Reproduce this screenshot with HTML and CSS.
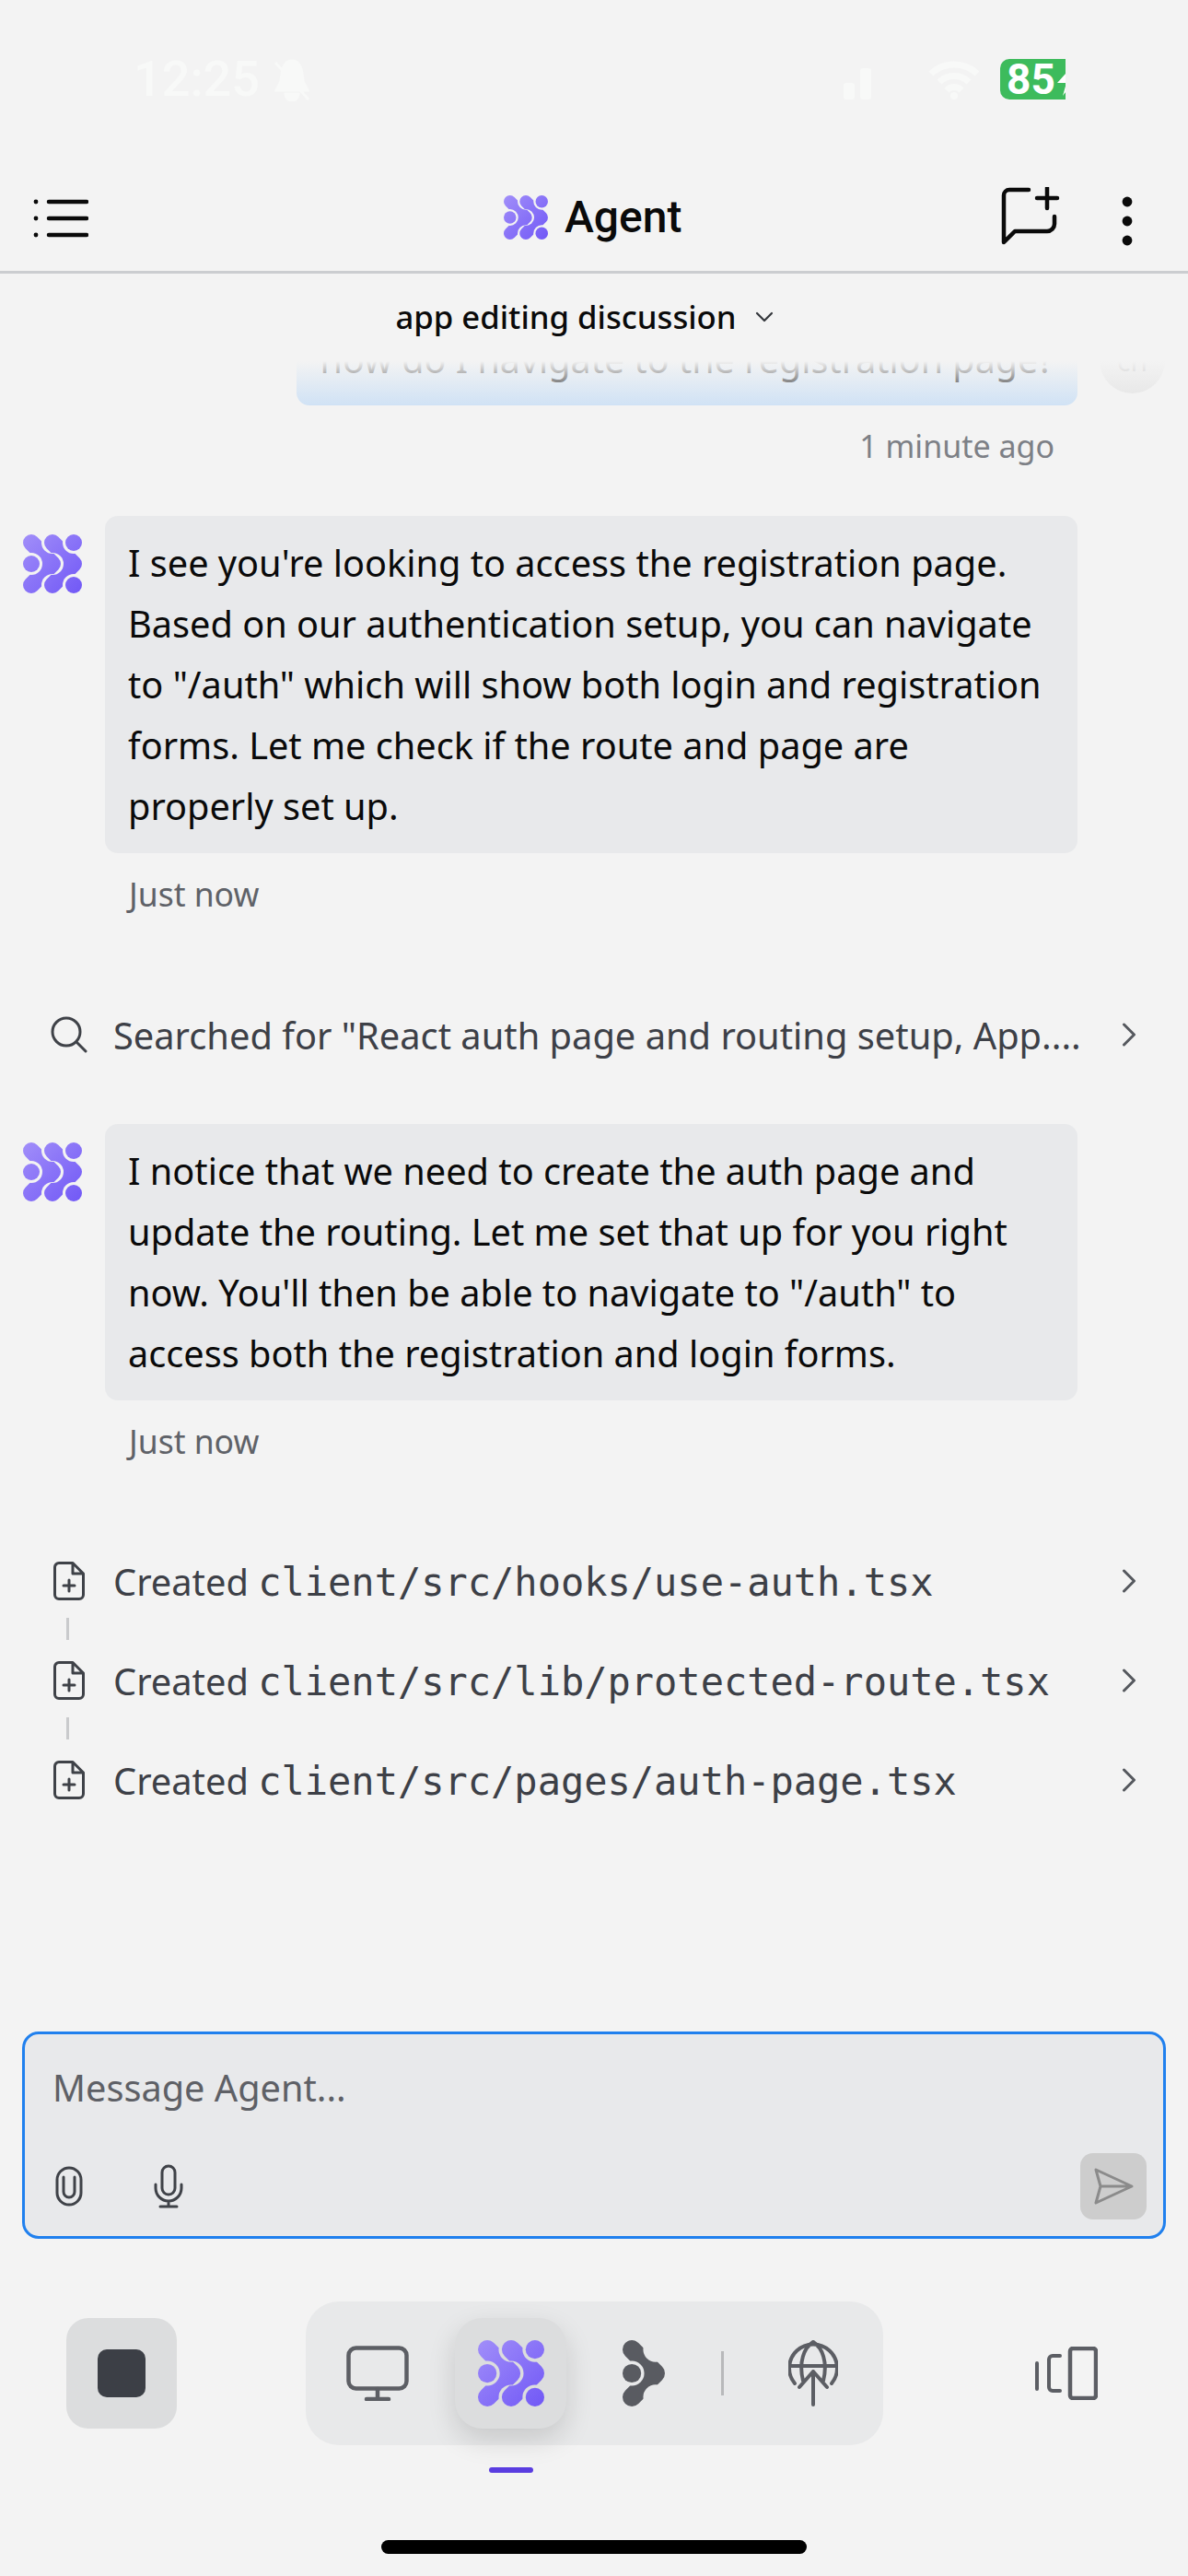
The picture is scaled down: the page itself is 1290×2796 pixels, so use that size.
FILE: index.html
```html
<!DOCTYPE html>
<html lang="en">
<head>
  <meta charset="UTF-8">
  <title>Agent</title>
  <link rel="stylesheet" href="styles.css">
</head>
<body>
  <svg class="defs" width="0" height="0">
    <defs>
      <linearGradient id="logo-fill" gradientUnits="userSpaceOnUse" x1="0" y1="0" x2="64" y2="64">
        <stop offset="0" stop-color="#a18ef9"/>
        <stop offset="1" stop-color="#7158f6"/>
      </linearGradient>
      <mask id="cut-left" maskUnits="userSpaceOnUse" x="-2" y="-2" width="68" height="68">
        <rect x="-2" y="-2" width="68" height="68" fill="#fff"/>
        <circle cx="32" cy="9" r="12"/>
        <circle cx="9" cy="32" r="12"/>
        <circle cx="32" cy="55" r="12"/>
      </mask>
      <mask id="cut-right" maskUnits="userSpaceOnUse" x="-2" y="-2" width="68" height="68">
        <rect x="-2" y="-2" width="68" height="68" fill="#fff"/>
        <circle cx="32" cy="32" r="12"/>
        <circle cx="55" cy="9" r="12"/>
        <circle cx="55" cy="55" r="12"/>
      </mask>
      <symbol id="logo" viewBox="0 0 64 64">
        <path mask="url(#cut-left)" d="M9 9L32 32L9 55" fill="none" stroke="url(#logo-fill)" stroke-width="18" stroke-linecap="round" stroke-linejoin="round"/>
        <path mask="url(#cut-right)" d="M32 9L55 32L32 55" fill="none" stroke="url(#logo-fill)" stroke-width="18" stroke-linecap="round" stroke-linejoin="round"/>
        <circle cx="9" cy="32" r="9" fill="url(#logo-fill)"/>
        <circle cx="55" cy="9" r="9" fill="url(#logo-fill)"/>
        <circle cx="55" cy="55" r="9" fill="url(#logo-fill)"/>
      </symbol>
      <symbol id="file-plus" viewBox="0 0 34 42">
        <path d="M6 1.500H21L32.500 13V36a4.500 4.500 0 0 1-4.500 4.500H6A4.500 4.500 0 0 1 1.500 36V6A4.500 4.500 0 0 1 6 1.500ZM21 1.500V13H32.500M17 20V32M11 26H23" fill="none" stroke="#3f4248" stroke-width="3" stroke-linejoin="round" stroke-linecap="round"/>
      </symbol>
      <symbol id="chevron" viewBox="0 0 16 26">
        <path d="M2.500 2L13.500 13L2.500 24" fill="none" stroke="#55585e" stroke-width="3" stroke-linecap="round" stroke-linejoin="round"/>
      </symbol>
    </defs>
  </svg>

  <div class="phone">
    <div class="status-bar">
      <span class="clock">12:25</span>
      <svg class="bell" width="44" height="46" viewBox="0 0 44 46"><path d="M22 2C13 2 11 12 10 24L5 34H39L34 24C33 12 31 2 22 2ZM15 38H29A7 7 0 0 1 15 38ZM4 4L40 44" fill="#f8f9f8" stroke="#f8f9f8" stroke-width="3"/></svg>
      <svg class="signal" width="32" height="38" viewBox="0 0 32 38"><rect x="0" y="20" width="12" height="18" rx="3" fill="#f8f9f8"/><rect x="18" y="4" width="12" height="34" rx="3" fill="#f8f9f8"/></svg>
      <svg class="wifi" width="56" height="42" viewBox="0 0 56 42"><path d="M3 14A36 36 0 0 1 53 14M12 23A23 23 0 0 1 44 23M20 32A11 11 0 0 1 36 32" fill="none" stroke="#f8f9f8" stroke-width="7"/><circle cx="28" cy="38" r="4" fill="#f8f9f8"/></svg>
      <div class="battery">
        <span>85</span>
        <svg width="20" height="44" viewBox="0 0 20 44"><path d="M20 6L2 26H12L8 40L20 24Z" fill="#fff"/></svg>
      </div>
    </div>

    <header class="top-bar">
      <svg class="menu-icon" width="60" height="44" viewBox="0 0 60 44">
        <path d="M17 4H58M17 22H58M17 40H58" stroke="#0a0a0a" stroke-width="4.500" stroke-linecap="round"/>
        <circle cx="3" cy="4" r="2.400" fill="#0a0a0a"/><circle cx="3" cy="22" r="2.400" fill="#0a0a0a"/><circle cx="3" cy="40" r="2.400" fill="#0a0a0a"/>
      </svg>
      <div class="top-title">
        <svg class="logo-head"><use href="#logo"/></svg>
        <span>Agent</span>
      </div>
      <svg class="new-chat" width="64" height="64" viewBox="0 0 64 64">
        <path d="M30 3H9A6 6 0 0 0 3 9V60L15 48H50A8 8 0 0 0 58 40V32M50 1V23M39 12H61" fill="none" stroke="#0a0a0a" stroke-width="4.500" stroke-linecap="round" stroke-linejoin="round"/>
      </svg>
      <svg class="more" width="12" height="54" viewBox="0 0 12 54"><circle cx="6" cy="6" r="5.400" fill="#0a0a0a"/><circle cx="6" cy="27" r="5.400" fill="#0a0a0a"/><circle cx="6" cy="48" r="5.400" fill="#0a0a0a"/></svg>
    </header>

    <div class="thread-title">
      <span>app editing discussion</span>
      <svg width="20" height="12" viewBox="0 0 20 12"><path d="M2 2L10 10L18 2" fill="none" stroke="#33363b" stroke-width="2.200" stroke-linecap="round" stroke-linejoin="round"/></svg>
    </div>

    <main class="chat">
      <div class="chat-fade"></div>
      <div class="user-row">
        <div class="user-bubble">how do I navigate to the registration page?</div>
        <div class="avatar">ch</div>
      </div>
      <div class="time time-right">1 minute ago</div>

      <div class="agent-row first">
        <svg class="logo-side"><use href="#logo"/></svg>
        <div class="agent-bubble">I see you're looking to access the registration page. Based on our authentication setup, you can navigate to "/auth" which will show both login and registration forms. Let me check if the route and page are properly set up.</div>
      </div>
      <div class="time time-left">Just now</div>

      <div class="action search-action">
        <svg class="action-icon" width="40" height="40" viewBox="0 0 40 40"><circle cx="17" cy="17" r="15" fill="none" stroke="#3f4248" stroke-width="3"/><path d="M28 28L38 38" stroke="#3f4248" stroke-width="3" stroke-linecap="round"/></svg>
        <span class="action-text">Searched for "React auth page and routing setup, App....</span>
        <svg class="chevron"><use href="#chevron"/></svg>
      </div>

      <div class="agent-row second">
        <svg class="logo-side"><use href="#logo"/></svg>
        <div class="agent-bubble">I notice that we need to create the auth page and update the routing. Let me set that up for you right now. You'll then be able to navigate to "/auth" to access both the registration and login forms.</div>
      </div>
      <div class="time time-left">Just now</div>

      <div class="files">
        <div class="action">
          <svg class="action-icon file-icon"><use href="#file-plus"/></svg>
          <span class="action-text">Created <code>client/src/hooks/use-auth.tsx</code></span>
          <svg class="chevron"><use href="#chevron"/></svg>
        </div>
        <div class="connector"></div>
        <div class="action">
          <svg class="action-icon file-icon"><use href="#file-plus"/></svg>
          <span class="action-text">Created <code>client/src/lib/protected-route.tsx</code></span>
          <svg class="chevron"><use href="#chevron"/></svg>
        </div>
        <div class="connector"></div>
        <div class="action">
          <svg class="action-icon file-icon"><use href="#file-plus"/></svg>
          <span class="action-text">Created <code>client/src/pages/auth-page.tsx</code></span>
          <svg class="chevron"><use href="#chevron"/></svg>
        </div>
      </div>
    </main>

    <section class="composer">
      <div class="placeholder">Message Agent...</div>
      <div class="composer-tools">
        <svg class="clip" width="32" height="44" viewBox="0 0 32 44"><path d="M29 29V15A13 13 0 0 0 3 15V29A13 13 0 0 0 29 29ZM10 12V28A6 6 0 0 0 22 28V12" fill="none" stroke="#3f4248" stroke-width="3" stroke-linecap="round"/></svg>
        <svg class="mic" width="32" height="48" viewBox="0 0 32 48"><rect x="9" y="2" width="14" height="31" rx="7" fill="none" stroke="#3f4248" stroke-width="3"/><path d="M2 22V26A14 14 0 0 0 30 26V22M16 40V46M7 46H25" fill="none" stroke="#3f4248" stroke-width="3" stroke-linecap="round"/></svg>
        <button class="send">
          <svg width="44" height="40" viewBox="0 0 44 40"><path d="M3 2L42 20L3 38L8 20ZM8 20H42" fill="none" stroke="#8b8b8b" stroke-width="3" stroke-linejoin="round"/></svg>
        </button>
      </div>
    </section>

    <nav class="dock">
      <button class="stop"><span class="stop-square"></span></button>
      <div class="dock-pill">
        <svg class="monitor" width="68" height="60" viewBox="0 0 68 60"><rect x="2.500" y="2.500" width="63" height="44" rx="8" fill="none" stroke="#5c5e64" stroke-width="4.500"/><path d="M34 47V58M22 58H46" fill="none" stroke="#5c5e64" stroke-width="4.500" stroke-linecap="round"/></svg>
        <div class="dock-active">
          <svg class="logo-dock"><use href="#logo"/></svg>
          <span class="dock-marker"></span>
        </div>
        <svg class="graph" width="46" height="72" viewBox="0 0 41 64">
          <mask id="cut-graph" maskUnits="userSpaceOnUse" x="-2" y="-2" width="68" height="68">
            <rect x="-2" y="-2" width="68" height="68" fill="#fff"/>
            <circle cx="32" cy="9" r="12"/><circle cx="9" cy="32" r="12"/><circle cx="32" cy="55" r="12"/>
          </mask>
          <path mask="url(#cut-graph)" d="M9 9L32 32L9 55" fill="none" stroke="#595b61" stroke-width="18" stroke-linecap="round" stroke-linejoin="round"/>
          <circle cx="9" cy="32" r="9" fill="#595b61"/>
        </svg>
        <span class="dock-divider"></span>
        <svg class="deploy" width="54" height="72" viewBox="0 0 54 72">
          <path d="M7 47A26 26 0 1 1 47 47M1 28H53M16 44C11 24 17 8 27 2C37 8 43 24 38 44M27 34V70M12 51L27 34L42 51" fill="none" stroke="#5c5e64" stroke-width="4" stroke-linecap="round" stroke-linejoin="round"/>
        </svg>
      </div>
      <svg class="split" width="68" height="58" viewBox="0 0 68 58">
        <rect x="38" y="2" width="28" height="54" rx="3" fill="none" stroke="#5c5e64" stroke-width="4.500"/>
        <path d="M27 10H19A4 4 0 0 0 15 14V44A4 4 0 0 0 19 48H27M2 18V46" fill="none" stroke="#5c5e64" stroke-width="4" stroke-linecap="round"/>
      </svg>
    </nav>

    <div class="home-bar"></div>
  </div>
</body>
</html>
```

FILE: styles.css
```css
* { margin: 0; padding: 0; box-sizing: border-box; }
body {
  background: #f3f3f3;
  font-family: "Noto Sans", Roboto, sans-serif;
  color: #0a0a0a;
}
.defs { display: block; height: 0; }
.phone {
  width: 1290px;
  height: 2796px;
  display: flex;
  flex-direction: column;
  overflow: hidden;
}

/* status bar, almost invisible on the light background */
.status-bar {
  height: 170px;
  flex: none;
  display: flex;
  align-items: flex-start;
  padding: 64px 0 0 145px;
  color: #f8f9f8;
}
.clock {
  font-family: Roboto, sans-serif;
  font-size: 54px;
  line-height: 44px;
  font-weight: 500;
  width: 150px;
}
.signal { margin: 6px 0 0 577px; }
.wifi { margin: 2px 0 0 60px; }
.battery {
  width: 71px;
  height: 44px;
  margin-left: 22px;
  overflow: hidden;
  display: flex;
  background: #3dbb5c;
  border-radius: 10px 0 0 10px;
  color: #fff;
  font-family: Roboto, sans-serif;
  font-size: 46px;
  font-weight: 700;
  line-height: 44px;
  padding-left: 7px;
}
.battery svg { flex: none; }

.top-bar {
  height: 127px;
  flex: none;
  display: flex;
  align-items: flex-start;
  border-bottom: 3px solid #cbcdd0;
  padding: 33px 0 0 36px;
}
.menu-icon { margin-top: 12px; }
.top-title {
  display: flex;
  align-items: center;
  gap: 18px;
  margin: 9px 0 0 451px;
  width: 200px;
  font-family: Roboto, sans-serif;
  font-size: 48px;
  line-height: 48px;
  font-weight: 500;
}
.logo-head { width: 48px; height: 48px; flex: none; }
.new-chat { margin-left: 340px; }
.more { margin: 10px 0 0 67px; }

.thread-title {
  height: 93px;
  flex: none;
  display: flex;
  align-items: center;
  justify-content: center;
  gap: 20px;
  padding-right: 21px;
  font-size: 34.700px;
  font-weight: 500;
}

.chat {
  flex: 1;
  position: relative;
  overflow: hidden;
  min-height: 0;
}
.chat-fade {
  position: absolute;
  top: 0;
  left: 0;
  right: 0;
  height: 50px;
  background: linear-gradient(#f3f3f3 4%, rgba(243, 243, 243, 0));
}
.user-row {
  display: flex;
  margin-top: -50px;
  padding-left: 322px;
  gap: 24px;
  align-items: flex-start;
}
.user-bubble {
  width: 848px;
  height: 100px;
  flex: none;
  background: #d0e2f5;
  border-radius: 14px;
  font-size: 39.500px;
  line-height: 100px;
  text-align: center;
  white-space: nowrap;
  overflow: hidden;
}
.avatar {
  width: 71px;
  height: 71px;
  flex: none;
  margin-top: 16px;
  border-radius: 50%;
  background: #e4e4e4;
  color: #a8a8a8;
  font-size: 30px;
  line-height: 71px;
  text-align: center;
}
.time {
  font-size: 34px;
  line-height: 48px;
  margin-top: 20px;
  padding-bottom: 2px;
}
.time-right { color: #7d8086; text-align: right; padding-right: 145px; }
.time-left { color: #5f6268; font-size: 35.500px; padding-left: 140px; }

.agent-row {
  display: flex;
  padding-left: 25px;
  gap: 25px;
  align-items: flex-start;
}
.agent-row.first { margin-top: 50px; }
.agent-row.second { margin-top: 67px; }
.logo-side { width: 64px; height: 64px; flex: none; margin-top: 20px; }
.agent-bubble {
  width: 1056px;
  flex: none;
  background: #e8e9eb;
  border-radius: 14px;
  padding: 18px 25px;
  font-size: 39.700px;
  line-height: 66px;
}

.action {
  height: 60px;
  display: flex;
  align-items: center;
  padding-left: 55px;
  color: #3d4047;
  font-size: 39.800px;
  white-space: nowrap;
}
.search-action { margin-top: 97px; }
.action-icon { flex: none; }
.action-text { margin-left: 28px; flex: 1; overflow: hidden; }
.action-text code {
  font-family: "DejaVu Sans Mono", "Liberation Mono", monospace;
  font-size: 42px;
}
.chevron { width: 16px; height: 26px; flex: none; margin: 0 56px 0 20px; }
.file-icon { width: 34px; height: 42px; margin-left: 3px; }
.files .action-text { margin-left: 31px; }
.files { margin-top: 96px; }
.connector {
  width: 3px;
  height: 24px;
  margin: 10px 0 14px 72px;
  background: #c9cacc;
}

.composer {
  flex: none;
  height: 225px;
  margin: 0 24px 68px;
  background: #e8e9eb;
  border: 3px solid #2080ee;
  border-radius: 18px;
  padding: 33px 18px 0 30px;
}
.placeholder {
  font-size: 39.700px;
  line-height: 50px;
  color: #5e6066;
}
.composer-tools {
  display: flex;
  align-items: center;
  margin-top: 46px;
}
.clip { margin-left: 2px; }
.mic { margin-left: 76px; }
.send {
  width: 72px;
  height: 72px;
  margin-left: auto;
  border: none;
  border-radius: 14px;
  background: #cdcdcd;
  display: flex;
  align-items: center;
  justify-content: center;
}

.dock {
  flex: none;
  height: 156px;
  display: flex;
  align-items: center;
  padding: 0 98px 0 72px;
}
.stop {
  width: 120px;
  height: 120px;
  border: none;
  border-radius: 24px;
  background: #dcddde;
  display: flex;
  align-items: center;
  justify-content: center;
}
.stop-square {
  width: 52px;
  height: 52px;
  border-radius: 10px;
  background: #3c3f46;
}
.dock-pill {
  width: 627px;
  height: 156px;
  margin-left: 140px;
  border-radius: 36px;
  background: #e8e9ea;
  display: flex;
  align-items: center;
  padding-left: 44px;
}
.monitor { flex: none; }
.dock-active {
  width: 121px;
  height: 120px;
  flex: none;
  margin-left: 50px;
  position: relative;
  border-radius: 30px;
  background: #dcddde;
  box-shadow: 0 12px 30px rgba(0, 0, 0, 0.14);
  display: flex;
  align-items: center;
  justify-content: center;
}
.logo-dock { width: 72px; height: 72px; }
.dock-marker {
  position: absolute;
  left: 37px;
  bottom: -48px;
  width: 48px;
  height: 6px;
  border-radius: 3px;
  background: #5a3de0;
}
.graph { flex: none; margin-left: 61px; }
.dock-divider {
  width: 3px;
  height: 48px;
  flex: none;
  margin-left: 61px;
  background: #b8b9bb;
}
.deploy { flex: none; margin-left: 70px; }
.split { flex: none; margin-left: auto; }

.home-bar {
  width: 462px;
  height: 15px;
  flex: none;
  margin: 103px auto 24px;
  border-radius: 8px;
  background: #000;
}
```
